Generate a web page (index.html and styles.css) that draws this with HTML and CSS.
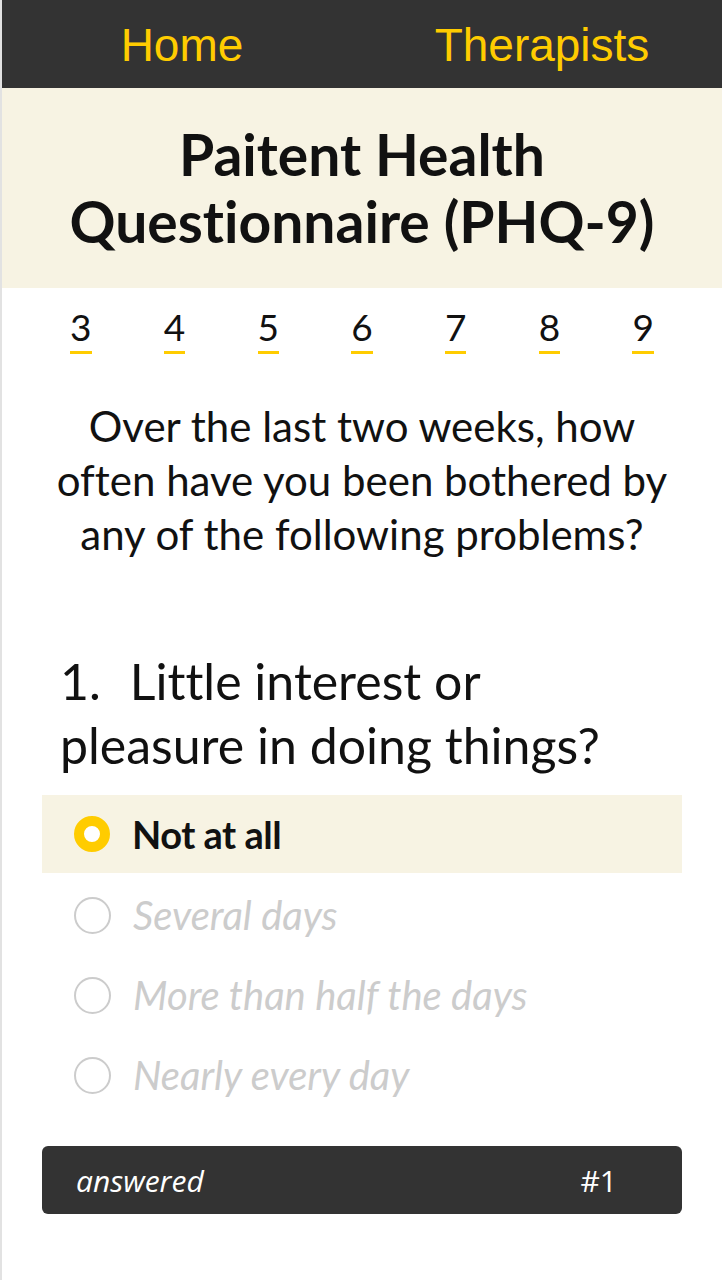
FILE: index.html
```html
<!DOCTYPE html>
<html lang="en">
<head>
<meta charset="utf-8">
<title>PHQ-9</title>
<link rel="stylesheet" href="styles.css">
</head>
<body>
<div class="page">
  <nav class="nav">
    <a class="nav-link" href="#">Home</a>
    <a class="nav-link" href="#">Therapists</a>
  </nav>
  <header class="title-bar">
    <h1 class="title">Paitent Health<br>Questionnaire (PHQ-9)</h1>
  </header>
  <div class="steps">
    <span class="step">3</span>
    <span class="step">4</span>
    <span class="step">5</span>
    <span class="step">6</span>
    <span class="step">7</span>
    <span class="step">8</span>
    <span class="step">9</span>
  </div>
  <p class="intro">Over the last two weeks, how often have you been bothered by any of the following problems?</p>
  <h2 class="question"><span class="qnum">1.</span>Little interest or pleasure in doing things?</h2>
  <ul class="options">
    <li class="option selected"><span class="radio"></span><span class="label">Not at all</span></li>
    <li class="option"><span class="radio"></span><span class="label">Several days</span></li>
    <li class="option"><span class="radio"></span><span class="label">More than half the days</span></li>
    <li class="option"><span class="radio"></span><span class="label">Nearly every day</span></li>
  </ul>
  <div class="status">
    <span class="status-text">answered</span>
    <span class="status-num">#1</span>
  </div>
</div>
</body>
</html>
```
FILE: styles.css
```css
html, body {
  margin: 0;
  padding: 0;
  background: #fff;
}
.page {
  min-height: 1280px;
  border-left: 2px solid #e2e2e2;
  font-family: Lato, "Open Sans", sans-serif;
  font-variant-ligatures: none;
  color: #111;
  box-sizing: border-box;
}
.nav {
  display: grid;
  grid-template-columns: 1fr 1fr;
  height: 88px;
  background: #333;
  align-items: center;
}
.nav-link {
  font-family: "Liberation Sans", Arial, sans-serif;
  font-size: 46px;
  color: #fc0;
  text-decoration: none;
  text-align: center;
  line-height: 1;
  margin-top: 2px;
}
.title-bar {
  background: #f7f3e3;
  height: 200px;
  display: flex;
  align-items: center;
  justify-content: center;
}
.title {
  margin: 0;
  font-size: 57px;
  line-height: 67px;
  font-weight: 700;
  text-align: center;
}
.steps {
  display: grid;
  grid-template-columns: repeat(7, 1fr);
  padding: 19px 32px 0 32px;
  justify-items: center;
}
.step {
  font-size: 37px;
  line-height: 40px;
  padding-bottom: 4px;
  border-bottom: 3px solid #fc0;
}
.intro {
  margin: 45px 0 0;
  padding: 0 40px;
  font-size: 42px;
  line-height: 54px;
  text-align: center;
}
.question {
  margin: 88px 0 0;
  padding: 0 60px 0 58px;
  font-size: 50px;
  line-height: 64px;
  font-weight: 400;
}
.qnum {
  margin-right: 29px;
}
.options {
  list-style: none;
  margin: 18px 40px 0 40px;
  padding: 0;
}
.option {
  display: flex;
  align-items: center;
  height: 80px;
  padding-left: 32px;
}
.option.selected {
  background: #f7f3e3;
  height: 78px;
  margin-bottom: 2px;
}
.radio {
  width: 33px;
  height: 33px;
  border: 2px solid #ccc;
  border-radius: 50%;
  box-sizing: content-box;
  flex: none;
  margin-right: 22px;
  background: #fff;
}
.selected .radio {
  width: 16px;
  height: 16px;
  border: 10.5px solid #fc0;
}
.label {
  font-size: 40px;
  font-style: italic;
  color: #ccc;
}
.selected .label {
  font-size: 38px;
  font-style: normal;
  font-weight: 700;
  color: #111;
  letter-spacing: -0.5px;
}
.status {
  display: flex;
  justify-content: space-between;
  align-items: center;
  margin: 31px 40px 0 40px;
  height: 68px;
  padding: 0 65px 0 34px;
  background: #333;
  border-radius: 6px;
  color: #fff;
  font-family: "Open Sans", sans-serif;
  font-size: 30px;
}
.status-text {
  font-style: italic;
}
```
